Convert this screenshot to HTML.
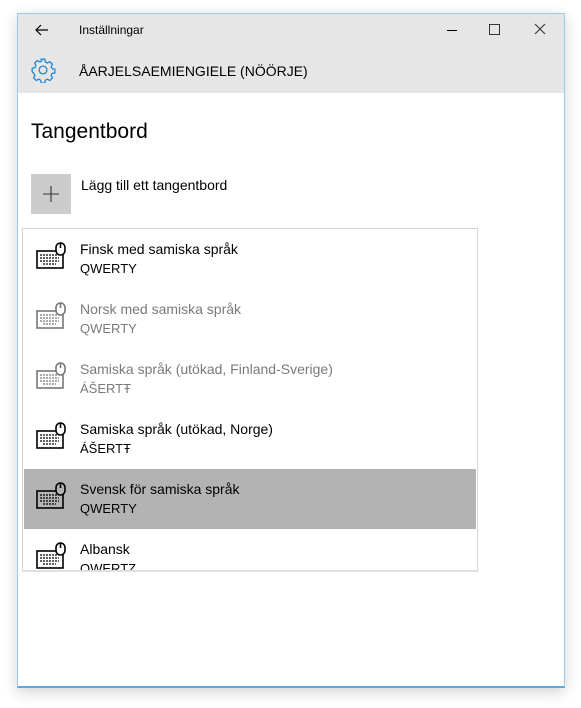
<!DOCTYPE html>
<html><head><style>
body{margin:0;width:581px;height:708px;background:#fff;position:relative;overflow:hidden;font-family:"Liberation Sans",sans-serif;}
.win{position:absolute;left:17px;top:13px;width:546px;height:672px;background:#fff;border:1px solid #9ccbea;border-bottom:2px solid #5aa9e0;box-shadow:0 4px 14px rgba(0,0,0,0.18);}
.tb{position:absolute;left:0;top:0;width:546px;height:79px;background:#e6e6e6;}
.t{position:absolute;white-space:nowrap;color:#000;}
.row{position:absolute;left:1px;width:452px;height:60px;}
.row .a{position:absolute;left:56px;top:12px;font-size:14px;}
.row .b{position:absolute;left:56px;top:32px;font-size:13px;}
.g{color:#7a7a7a;}
</style></head><body>
<div class="win">
<div class="tb">
<svg style="position:absolute;left:16px;top:8px" width="16" height="16" viewBox="0 0 16 16"><path d="M14 8H2M7 3L2 8l5 5" stroke="#000" stroke-width="1.2" fill="none"/></svg>
<div class="t" style="left:61px;top:9px;font-size:12px">Inställningar</div>
<div style="position:absolute;left:429px;top:16px;width:10px;height:1px;background:#000"></div>
<div style="position:absolute;left:471px;top:10px;width:9px;height:9px;border:1px solid #333"></div>
<svg style="position:absolute;left:516px;top:9px" width="12" height="12"><path d="M1 1L11 11M11 1L1 11" stroke="#333" stroke-width="1.1"/></svg>
<svg style="position:absolute;left:12px;top:43px" width="26" height="26" viewBox="0 0 24 24"><path d="M10.3 2h3.4l.5 2.6 1.7.9 2.4-1.2 2.4 2.4-1.2 2.4.9 1.7 2.6.5v3.4l-2.6.5-.9 1.7 1.2 2.4-2.4 2.4-2.4-1.2-1.7.9-.5 2.6h-3.4l-.5-2.6-1.700-.9-2.4 1.2-2.4-2.4 1.2-2.4-.9-1.7L2 13.7v-3.4l2.6-.5.9-1.7-1.2-2.4 2.4-2.4 2.4 1.2 1.7-.9z" fill="none" stroke="#1e88d6" stroke-width="1.2"/><circle cx="12" cy="12" r="3.6" fill="none" stroke="#1e88d6" stroke-width="1.2"/></svg>
<div class="t" style="left:61px;top:49px;font-size:14px">ÅARJELSAEMIENGIELE (NÖÖRJE)</div>
</div>
<div class="t" style="left:13px;top:106px;font-size:21px">Tangentbord</div>
<div style="position:absolute;left:13px;top:160px;width:40px;height:40px;background:#ccc"></div>
<svg style="position:absolute;left:23px;top:170px" width="20" height="20"><path d="M10 2V18M2 10H18" stroke="#333" stroke-width="1.1"/></svg>
<div class="t" style="left:63px;top:163px;font-size:14px">Lägg till ett tangentbord</div>
<div style="position:absolute;left:4px;top:214px;width:454px;height:341px;border:1px solid #d6d6d6;border-bottom:2px solid #e0e0e0;overflow:hidden">
<div class="row" style="top:0"><svg style="position:absolute;left:9px;top:12px" width="36" height="30"><g fill="none" stroke="#000" stroke-width="1.6"><rect x="4" y="10" width="26" height="17"/><path d="M7 14h19M7 17h19M7 20h19M10 23h13" stroke-width="1.3" stroke-dasharray="2 1"/><rect x="23" y="2" width="9" height="12" rx="4.5" fill="#fff"/><path d="M27.5 2v5"/></g></svg><div class="a">Finsk med samiska språk</div><div class="b">QWERTY</div></div>
<div class="row g" style="top:60px"><svg style="position:absolute;left:9px;top:12px" width="36" height="30"><g fill="none" stroke="#777" stroke-width="1.6"><rect x="4" y="10" width="26" height="17"/><path d="M7 14h19M7 17h19M7 20h19M10 23h13" stroke-width="1.3" stroke-dasharray="2 1"/><rect x="23" y="2" width="9" height="12" rx="4.5" fill="#fff"/><path d="M27.5 2v5"/></g></svg><div class="a">Norsk med samiska språk</div><div class="b">QWERTY</div></div>
<div class="row g" style="top:120px"><svg style="position:absolute;left:9px;top:12px" width="36" height="30"><g fill="none" stroke="#777" stroke-width="1.6"><rect x="4" y="10" width="26" height="17"/><path d="M7 14h19M7 17h19M7 20h19M10 23h13" stroke-width="1.3" stroke-dasharray="2 1"/><rect x="23" y="2" width="9" height="12" rx="4.5" fill="#fff"/><path d="M27.5 2v5"/></g></svg><div class="a">Samiska språk (utökad, Finland-Sverige)</div><div class="b">ÁŠERTŦ</div></div>
<div class="row" style="top:180px"><svg style="position:absolute;left:9px;top:12px" width="36" height="30"><g fill="none" stroke="#000" stroke-width="1.6"><rect x="4" y="10" width="26" height="17"/><path d="M7 14h19M7 17h19M7 20h19M10 23h13" stroke-width="1.3" stroke-dasharray="2 1"/><rect x="23" y="2" width="9" height="12" rx="4.5" fill="#fff"/><path d="M27.5 2v5"/></g></svg><div class="a">Samiska språk (utökad, Norge)</div><div class="b">ÁŠERTŦ</div></div>
<div class="row" style="top:240px;background:#b3b3b3"><svg style="position:absolute;left:9px;top:12px" width="36" height="30"><g fill="none" stroke="#000" stroke-width="1.6"><rect x="4" y="10" width="26" height="17"/><path d="M7 14h19M7 17h19M7 20h19M10 23h13" stroke-width="1.3" stroke-dasharray="2 1"/><rect x="23" y="2" width="9" height="12" rx="4.5" fill="#b3b3b3"/><path d="M27.5 2v5"/></g></svg><div class="a">Svensk för samiska språk</div><div class="b">QWERTY</div></div>
<div class="row" style="top:300px"><svg style="position:absolute;left:9px;top:12px" width="36" height="30"><g fill="none" stroke="#000" stroke-width="1.6"><rect x="4" y="10" width="26" height="17"/><path d="M7 14h19M7 17h19M7 20h19M10 23h13" stroke-width="1.3" stroke-dasharray="2 1"/><rect x="23" y="2" width="9" height="12" rx="4.5" fill="#fff"/><path d="M27.5 2v5"/></g></svg><div class="a">Albansk</div><div class="b">QWERTZ</div></div>
</div>
</div>
</body></html>
